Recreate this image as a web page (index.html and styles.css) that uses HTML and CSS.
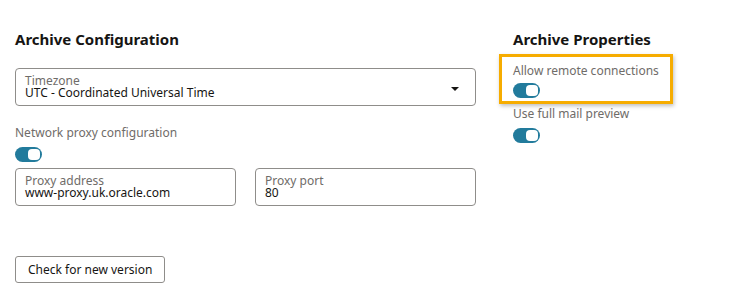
FILE: index.html
```html
<!DOCTYPE html>
<html lang="en">
<head>
  <meta charset="UTF-8">
  <title>Archive Settings</title>
  <link rel="stylesheet" href="styles.css">
</head>
<body>

<div class="settings">
  <section class="config">
    <h2>Archive Configuration</h2>

    <div class="field select-field">
      <span class="field-label">Timezone</span>
      <span class="field-value">UTC - Coordinated Universal Time</span>
      <span class="caret"></span>
    </div>

    <div class="switch-group">
      <span class="switch-label">Network proxy configuration</span>
      <span class="switch"></span>
    </div>

    <div class="field-row">
      <div class="field">
        <span class="field-label">Proxy address</span>
        <span class="field-value">www-proxy.uk.oracle.com</span>
      </div>
      <div class="field">
        <span class="field-label">Proxy port</span>
        <span class="field-value">80</span>
      </div>
    </div>

    <button class="btn" type="button">Check for new version</button>
  </section>

  <section class="props">
    <h2>Archive Properties</h2>

    <div class="switch-group focused">
      <span class="switch-label">Allow remote connections</span>
      <span class="switch"></span>
    </div>

    <div class="switch-group">
      <span class="switch-label">Use full mail preview</span>
      <span class="switch"></span>
    </div>
  </section>
</div>

</body>
</html>
```

FILE: styles.css
```css
body {
  margin: 0;
  padding: 0 15px;
  background-color: #fff;
  font-family: "Noto Sans", "Open Sans", sans-serif;
  color: #161513;
}

.settings {
  display: flex;
  gap: 37px;
}

h2 {
  font-size: 15px;
  font-weight: bold;
  line-height: 20px;
  margin: 29px 0 19px;
}

.config {
  width: 461px;
}

.props {
  display: flex;
  flex-direction: column;
  align-items: flex-start;
}

.field {
  position: relative;
  display: flex;
  flex-direction: column;
  height: 38px;
  box-sizing: border-box;
  padding: 6px 9px 0;
  border: 1px solid #8f8d8a;
  border-radius: 4px;
}

.field-label {
  font-size: 12px;
  line-height: 12px;
  color: #6f6c69;
}

.field-value {
  font-size: 12px;
  line-height: 12px;
  color: #161513;
}

.caret {
  position: absolute;
  right: 16px;
  top: 18px;
  width: 0;
  height: 0;
  border-left: 4px solid transparent;
  border-right: 4px solid transparent;
  border-top: 4px solid #161513;
}

.switch-group {
  display: flex;
  flex-direction: column;
  align-items: flex-start;
}

.config .switch-group {
  margin-top: 19px;
}

.switch-label {
  font-size: 12px;
  line-height: 16px;
  color: #6f6c69;
  margin-bottom: 6px;
}

.switch {
  position: relative;
  width: 27px;
  height: 15px;
  box-sizing: border-box;
  border-radius: 8px;
  background-color: #227b9c;
}

.switch::after {
  content: "";
  position: absolute;
  top: 2px;
  right: 2px;
  width: 12px;
  height: 11px;
  border-radius: 4px;
  background-color: #fff;
}

.field-row {
  display: flex;
  gap: 19px;
  margin-top: 6px;
}

.field-row .field {
  flex: 1;
}

.btn {
  margin-top: 50px;
  height: 27px;
  padding: 0 12px;
  font-family: inherit;
  font-size: 12px;
  color: #161513;
  background-color: #fff;
  border: 1px solid #8f8d8a;
  border-radius: 3px;
}

.props h2 {
  margin-bottom: 14px;
}

.props .focused .switch-label {
  margin-bottom: 4px;
}

.props .switch-group + .switch-group {
  margin-top: 8px;
}

.focused {
  position: relative;
}

.focused::before {
  content: "";
  position: absolute;
  left: -14px;
  right: -14px;
  top: -9px;
  bottom: -6px;
  border: 3px solid #f6ac00;
  box-shadow: 1px 2px 4px rgba(0, 0, 0, 0.25);
}
```
